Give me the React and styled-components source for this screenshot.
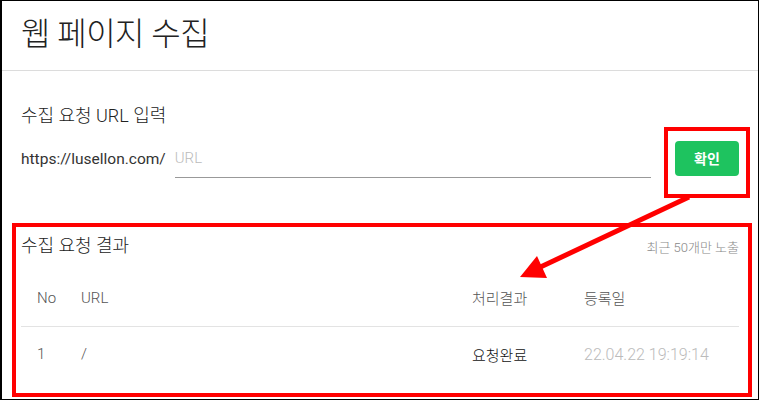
import React from "react";
import styled, { createGlobalStyle } from "styled-components";

const Global = createGlobalStyle`
  html, body { margin: 0; padding: 0; background: #fff; }
  body { font-family: Roboto, "Noto Sans CJK KR", sans-serif; }
  * { box-sizing: border-box; }
`;

const Page = styled.div`
  position: relative;
  width: 759px;
  height: 400px;
  border: 1px solid #000;
  border-left-width: 2px;
  background: #fff;
  overflow: hidden;
  font-family: Roboto, "Noto Sans CJK KR", sans-serif;
`;

const Header = styled.header`
  height: 70px;
  padding: 0 19px;
  display: flex;
  align-items: center;
  border-bottom: 1px solid #dcdcdc;
`;

const Title = styled.h1`
  margin: 0 0 9px;
  font-size: 32px;
  font-weight: 300;
  color: #222;
  letter-spacing: -0.5px;
`;

const Body = styled.main`
  padding: 0 19px;
`;

const SectionTitle = styled.h2`
  margin: 0;
  font-size: 18px;
  font-weight: 300;
  color: #222;
  line-height: 26px;
`;

const InputSection = styled.section`
  padding-top: 32px;
`;

const InputRow = styled.div`
  display: flex;
  align-items: center;
  margin-top: 15px;
  gap: 9px;
`;

const Prefix = styled.span`
  font-size: 15.5px;
  font-weight: 400;
  color: #333;
  margin-top: -5px;
`;

const UrlInput = styled.input`
  flex: 1;
  max-width: 476px;
  height: 34px;
  border: none;
  border-bottom: 1px solid #999;
  outline: none;
  font: inherit;
  font-size: 15px;
  font-weight: 300;
  padding: 0 0 6px 0;
  color: #333;
  background: transparent;
  &::placeholder { color: #bbb; }
`;

const ConfirmButton = styled.button`
  margin-left: auto;
  width: 64px;
  height: 35px;
  border: none;
  border-radius: 4px;
  background: #1ec35f;
  color: #fff;
  font: inherit;
  font-size: 14px;
  font-weight: 700;
  margin-top: -6px;
`;

const ResultSection = styled.section`
  padding-top: 55px;
`;

const ResultHead = styled.div`
  display: flex;
  align-items: center;
  justify-content: space-between;
`;

const Note = styled.span`
  font-size: 13px;
  font-weight: 300;
  color: #888;
`;

const Row = styled.div`
  display: grid;
  grid-template-columns: 44px 1fr 112px 155px;
  align-items: center;
  height: ${p => (p.$head ? "58px" : "54px")};
  padding-left: 16px;
  border-bottom: ${p => (p.$head ? "1px solid #e3e3e3" : "none")};
  margin-top: ${p => (p.$head ? "10px" : "0")};
`;

const Cell = styled.span`
  font-size: ${p => p.$size || "15px"};
  font-weight: 300;
  color: ${p => p.$color || "#555"};
`;

const Annot = styled.div`
  position: absolute;
  border: 4px solid #f00;
  pointer-events: none;
`;

const ArrowLayer = styled.svg`
  position: absolute;
  left: -2px;
  top: -1px;
  pointer-events: none;
`;

export default function App() {
  return (
    <>
      <Global />
      <Page>
        <Header>
          <Title>웹 페이지 수집</Title>
        </Header>
        <Body>
          <InputSection>
            <SectionTitle>수집 요청 URL 입력</SectionTitle>
            <InputRow>
              <Prefix>https://lusellon.com/</Prefix>
              <UrlInput placeholder="URL" />
              <ConfirmButton>확인</ConfirmButton>
            </InputRow>
          </InputSection>
          <ResultSection>
            <ResultHead>
              <SectionTitle>수집 요청 결과</SectionTitle>
              <Note>최근 50개만 노출</Note>
            </ResultHead>
            <Row $head>
              <Cell>No</Cell>
              <Cell>URL</Cell>
              <Cell>처리결과</Cell>
              <Cell>등록일</Cell>
            </Row>
            <Row>
              <Cell>1</Cell>
              <Cell>/</Cell>
              <Cell $color="#111">요청완료</Cell>
              <Cell $color="#bbb" $size="16px">22.04.22 19:19:14</Cell>
            </Row>
          </ResultSection>
        </Body>
        <Annot style={{ left: 662, top: 126, width: 86, height: 71 }} />
        <Annot style={{ left: 10, top: 222, width: 740, height: 174 }} />
        <ArrowLayer width="759" height="401" viewBox="0 0 759 401">
          <line x1="689" y1="197" x2="532" y2="271" stroke="#f00" strokeWidth="5" />
          <polygon points="520,277 537,256 547,278" fill="#f00" />
        </ArrowLayer>
      </Page>
    </>
  );
}
